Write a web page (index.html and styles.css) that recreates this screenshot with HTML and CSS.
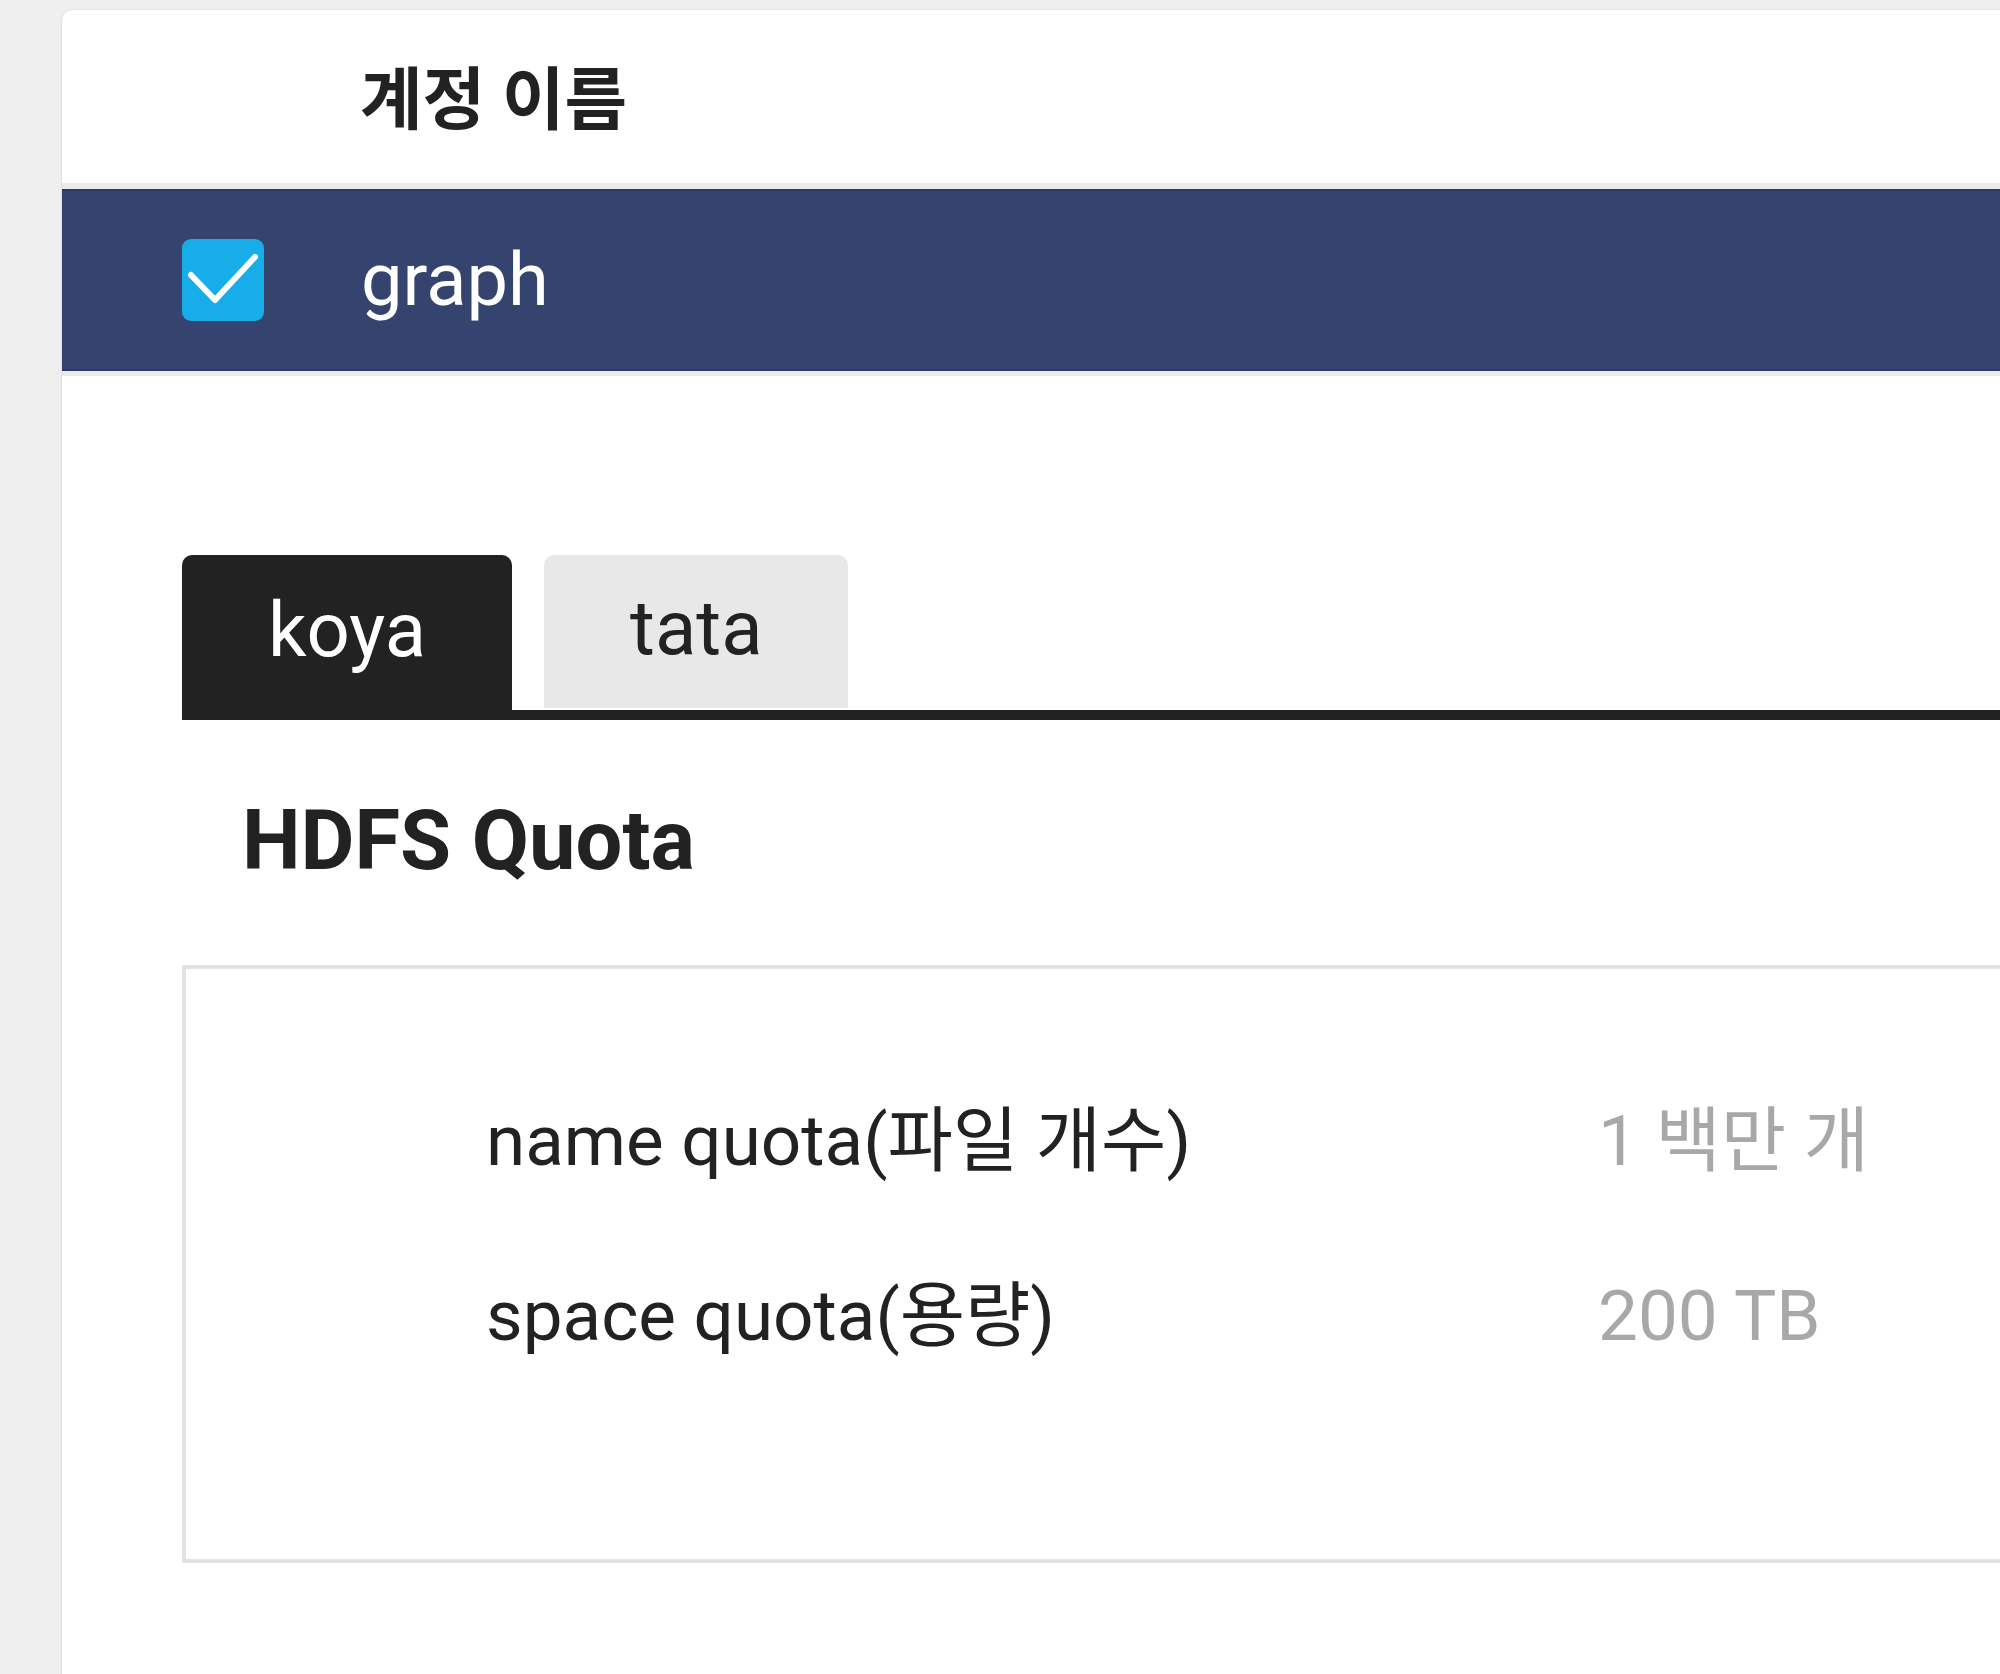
FILE: index.html
```html
<!DOCTYPE html>
<html lang="ko">
<head>
<meta charset="utf-8">
<title>HDFS Quota</title>
<link rel="stylesheet" href="styles.css">
</head>
<body>
<div class="card">
  <div class="thead">
    <div class="th-check"></div>
    <div class="th-name">계정 이름</div>
  </div>
  <div class="row selected">
    <div class="check">
      <svg width="82" height="82" viewBox="0 0 82 82">
        <rect x="0" y="0" width="82" height="82" rx="9" fill="#16ade8"/>
        <polyline points="9,36 33,61 73,18" fill="none" stroke="#ffffff" stroke-width="6" stroke-linecap="round" stroke-linejoin="round"/>
      </svg>
    </div>
    <div class="name">graph</div>
  </div>
  <div class="detail">
    <div class="tabs">
      <div class="tab active">koya</div>
      <div class="tab">tata</div>
    </div>
    <h2 class="title">HDFS Quota</h2>
    <div class="quota">
      <div class="q-label">name quota(파일 개수)</div>
      <div class="q-value">1 백만 개</div>
      <div class="q-label">space quota(용량)</div>
      <div class="q-value">200 TB</div>
    </div>
  </div>
</div>
</body>
</html>
```
FILE: styles.css
```css
html, body {
  margin: 0;
  padding: 0;
}
body {
  background: #efefef;
  overflow: hidden;
  width: 2000px;
  height: 1674px;
  font-family: Roboto, "Noto Sans CJK KR", sans-serif;
  color: #222;
}
.card {
  margin: 10px -60px 0 62px;
  background: #fff;
  border-radius: 10px 0 0 0;
  box-shadow: 0 0 2px rgba(0,0,0,0.18);
  height: 1700px;
}
.thead {
  box-sizing: border-box;
  height: 179px;
  padding-top: 8px;
  display: flex;
  align-items: center;
  border-bottom: 6px solid #eaeaea;
}
.th-check {
  width: 298px;
}
.th-name {
  font-size: 68px;
  font-weight: 700;
  color: #222;
  line-height: 1;
}
.row {
  height: 182px;
  display: flex;
  align-items: center;
  padding-left: 120px;
  border-bottom: 5px solid #ebebeb;
}
.row.selected {
  background: #35436f;
  box-shadow: inset 0 2px 0 #2d3a63, inset 0 -2px 0 #2d3a63;
}
.check {
  width: 82px;
  height: 82px;
  margin-right: 97px;
}
.check svg {
  display: block;
}
.name {
  font-size: 74px;
  color: #fff;
  line-height: 1;
}
.detail {
  padding: 179px 0 0 120px;
}
.tabs {
  display: flex;
  align-items: flex-start;
  gap: 32px;
  border-bottom: 10px solid #222;
}
.tab {
  height: 153px;
  box-sizing: border-box;
  padding: 0 86px 8px;
  margin-bottom: 2px;
  display: flex;
  align-items: center;
  font-size: 76px;
  line-height: 1;
  border-radius: 10px 10px 0 0;
  background: #e8e8e8;
  color: #222;
}
.tab.active {
  height: 155px;
  margin-bottom: 0;
  padding: 0 86px 6px;
  background: #222;
  color: #fff;
}
.title {
  margin: 79px 0 0 60px;
  font-size: 83px;
  font-weight: 700;
  line-height: 1;
  color: #222;
}
.quota {
  margin-top: 83px;
  border: 4px solid #e2e2e2;
  border-right: none;
  display: grid;
  grid-template-columns: 1112px auto;
  grid-auto-rows: 68px;
  row-gap: 107px;
  padding: 138px 0 0 300px;
  box-sizing: border-box;
  height: 598px;
  align-content: start;
}
.q-label {
  font-size: 71px;
  line-height: 68px;
  color: #222;
  white-space: nowrap;
}
.q-value {
  font-size: 71px;
  line-height: 68px;
  color: #a8a8a8;
  white-space: nowrap;
}
```
